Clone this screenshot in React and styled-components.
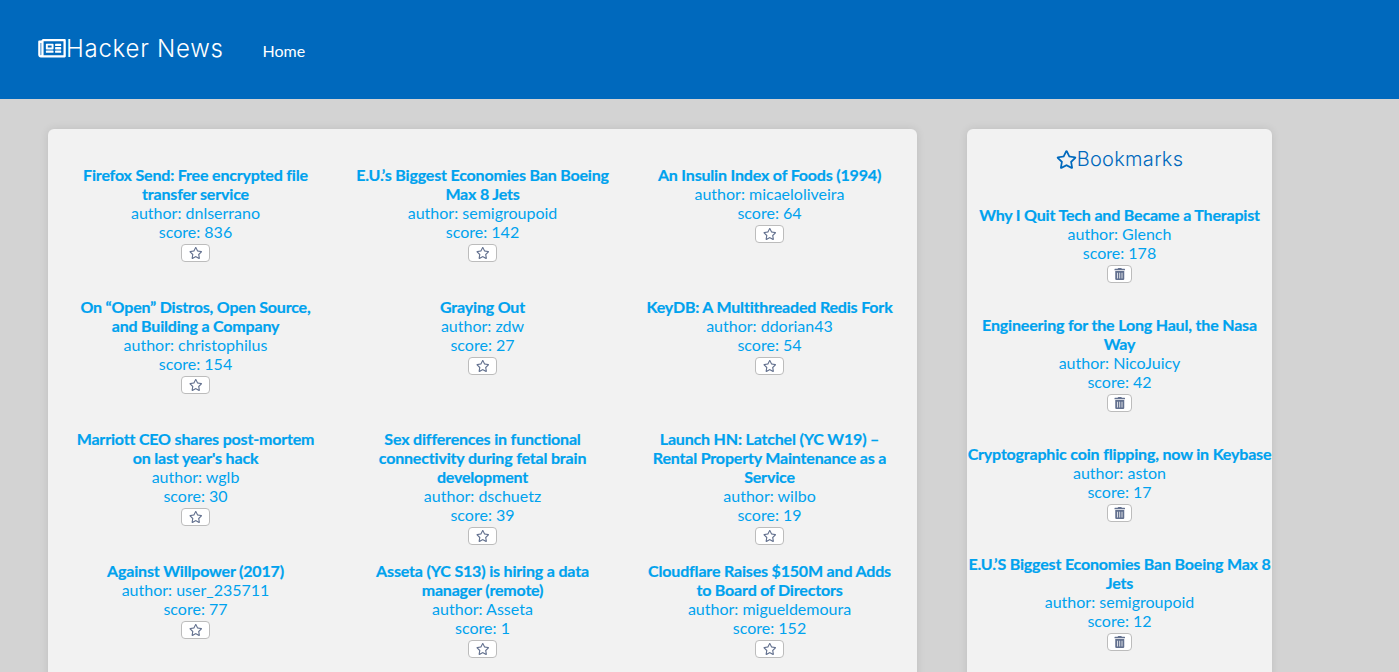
import React from "react";
import styled, { createGlobalStyle } from "styled-components";
import { FaRegNewspaper, FaRegStar, FaTrashAlt } from "react-icons/fa";

const Global = createGlobalStyle`
  html, body { margin: 0; padding: 0; background: #d3d3d3; }
  body { font-family: Lato, "Liberation Sans", sans-serif; font-size: 16px; }
`;

const Header = styled.header`
  height: 99px;
  background: #0069bd;
  display: flex;
  align-items: center;
  padding-left: 38px;
  color: #fff;
`;

const Brand = styled.div`
  display: flex;
  align-items: center;
  font-family: Inter, "Open Sans", sans-serif;
  font-size: 24px;
  font-weight: 300;
  letter-spacing: 0.75px;
  width: 225px;
  margin-top: -3px;
  svg { width: 28px; height: 24.5px; margin-top: 1px; }
`;

const NavLink = styled.a`
  font-size: 16px;
  color: #fff;
  margin-top: 1px;
  margin-left: -0.5px;
`;

const Main = styled.main`
  display: flex;
  align-items: flex-start;
  gap: 50px;
  padding: 30px 0 0 48px;
`;

const Panel = styled.section`
  background: #f2f2f2;
  border-radius: 6px;
  box-shadow: 0 0 8px rgba(0, 0, 0, 0.1);
  width: ${(p) => p.$width}px;
  box-sizing: border-box;
`;

const FeedPanel = styled(Panel)`
  padding: 36px 4px 20px;
`;

const Grid = styled.div`
  display: grid;
  grid-template-columns: repeat(3, 287px);
  grid-auto-rows: 1fr;
  justify-content: center;
`;

const Side = styled(Panel)`
  padding: 17px 0 20px;
`;

const SideTitle = styled.h2`
  margin: 0 0 33px;
  display: flex;
  justify-content: center;
  align-items: center;
  font-family: Inter, "Open Sans", sans-serif;
  font-size: 20px;
  font-weight: 300;
  letter-spacing: 0.3px;
  line-height: 26px;
  color: #0069bd;
  svg { width: 21px; height: 19px; }
`;

const Item = styled.article`
  padding: 0 16px 16px;
  text-align: center;
  color: #00a2ee;
  line-height: 19px;
  font-size: 16px;
`;

const SideItem = styled(Item)`
  padding: 0 0 32px;
`;

const Title = styled.a`
  display: block;
  font-weight: 700;
  letter-spacing: -0.18px;
  -webkit-text-stroke: 0.2px #00a2ee;
`;

const Meta = styled.div``;

const IconButton = styled.button`
  display: flex;
  align-items: center;
  justify-content: center;
  width: ${(p) => p.$width}px;
  height: 18px;
  margin: 3px auto 0;
  padding: 0;
  background: #fff;
  border: 1px solid #bcbcbc;
  border-radius: 4px;
  color: #63718f;
  svg { width: 13.5px; height: 12px; }
`;

const feed = [
  ["Firefox Send: Free encrypted file transfer service", "dnlserrano", 836],
  ["E.U.’s Biggest Economies Ban Boeing Max 8 Jets", "semigroupoid", 142],
  ["An Insulin Index of Foods (1994)", "micaeloliveira", 64],
  ["On “Open” Distros, Open Source, and Building a Company", "christophilus", 154],
  ["Graying Out", "zdw", 27],
  ["KeyDB: A Multithreaded Redis Fork", "ddorian43", 54],
  ["Marriott CEO shares post-mortem on last year's hack", "wglb", 30],
  ["Sex differences in functional connectivity during fetal brain development", "dschuetz", 39],
  ["Launch HN: Latchel (YC W19) – Rental Property Maintenance as a Service", "wilbo", 19],
  ["Against Willpower (2017)", "user_235711", 77],
  ["Asseta (YC S13) is hiring a data manager (remote)", "Asseta", 1],
  ["Cloudflare Raises $150M and Adds to Board of Directors", "migueldemoura", 152],
];

const bookmarks = [
  ["Why I Quit Tech and Became a Therapist", "Glench", 178],
  ["Engineering for the Long Haul, the Nasa Way", "NicoJuicy", 42],
  ["Cryptographic coin flipping, now in Keybase", "aston", 17],
  ["E.U.’S Biggest Economies Ban Boeing Max 8 Jets", "semigroupoid", 12],
];

const Story = ({ as: Wrap, story: [title, author, score], icon, buttonWidth }) => (
  <Wrap>
    <Title>{title}</Title>
    <Meta>author: {author}</Meta>
    <Meta>score: {score}</Meta>
    <IconButton $width={buttonWidth}>{icon}</IconButton>
  </Wrap>
);

export default function App() {
  return (
    <>
      <Global />
      <Header>
        <Brand>
          <FaRegNewspaper />
          Hacker News
        </Brand>
        <NavLink>Home</NavLink>
      </Header>
      <Main>
        <FeedPanel $width={869}>
          <Grid>
            {feed.map((s) => (
              <Story key={s[0]} as={Item} story={s} icon={<FaRegStar />} buttonWidth={29} />
            ))}
          </Grid>
        </FeedPanel>
        <Side $width={305}>
          <SideTitle>
            <FaRegStar />
            Bookmarks
          </SideTitle>
          {bookmarks.map((s) => (
            <Story key={s[0]} as={SideItem} story={s} icon={<FaTrashAlt />} buttonWidth={25} />
          ))}
        </Side>
      </Main>
    </>
  );
}
